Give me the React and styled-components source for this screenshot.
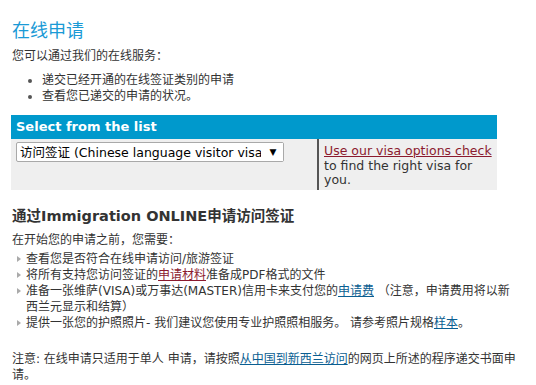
import React from 'react';
import styled, { createGlobalStyle } from 'styled-components';

const Global = createGlobalStyle`
  body {
    margin: 0;
    background: #fff;
    font-family: "DejaVu Sans", "Noto Sans CJK SC", sans-serif;
    font-size: 12px;
    color: #333;
  }
`

const Page = styled.div`
  padding: 17px 12px 0 12px;
`

const Title = styled.h2`
  margin: 0;
  font-size: 18px;
  font-weight: normal;
  line-height: 24px;
  color: #1a9ad6;
  font-family: "Noto Sans CJK SC", sans-serif;
`

const Para = styled.p`
  margin: ${p => p.top || 0}px 0 0 0;
  line-height: 16px;
`

const DotList = styled.ul`
  margin: 8px 0 0 0;
  padding-left: 30px;
  line-height: 16px;
  li::marker { color: #555; }
`

const Table = styled.div`
  margin-top: 11px;
  width: 486px;
  margin-left: -1px;
`

const Head = styled.div`
  height: 24px;
  background: #0099cc;
  color: #fff;
  font-weight: bold;
  font-size: 13px;
  line-height: 24px;
  padding-left: 5px;
`

const Row = styled.div`
  display: flex;
  background: #efefef;
  height: 51px;
`

const LeftCell = styled.div`
  width: 301px;
  padding: 3px 0 0 5px;
`

const RightCell = styled.div`
  flex: 1;
  border-left: 2px solid #555;
  padding: 5px 4px 0 5px;
  line-height: 14.5px;
  font-size: 12.5px;
`

const SelectWrap = styled.div`
  position: relative;
  width: 268px;
  height: 20px;
`

const Select = styled.select`
  appearance: none;
  width: 100%;
  height: 20px;
  border: 1px solid #a9a9a9;
  border-radius: 2px;
  background: #fff;
  font-family: "DejaVu Sans", "Noto Sans CJK SC", sans-serif;
  font-size: 12.5px;
  color: #000;
  padding: 0 22px 0 3px;
`

const Arrow = styled.span`
  position: absolute;
  right: 1px;
  top: 1px;
  width: 20px;
  height: 18px;
  background: #fff;
  font-size: 9px;
  line-height: 18px;
  text-align: center;
  color: #000;
  pointer-events: none;
`

const A = styled.a`
  color: ${p => p.red ? '#8b1a2e' : '#0a5e91'};
  text-decoration: underline;
`

const Heading = styled.h3`
  margin: 15px 0 0 0;
  font-size: 14.5px;
  font-weight: bold;
  line-height: 22px;
  color: #333;
`

const TriList = styled.ul`
  margin: 3px 0 0 0;
  padding: 0 8px 0 14px;
  list-style: none;
  line-height: 16px;
`

const TriItem = styled.li`
  position: relative;
  &::before {
    content: "";
    position: absolute;
    left: -9px;
    top: 5px;
    border-left: 4px solid #aaa;
    border-top: 3px solid transparent;
    border-bottom: 3px solid transparent;
  }
`

export default function App() {
  return (
    <Page>
      <Global />
      <Title>在线申请</Title>
      <Para top={7}>您可以通过我们的在线服务：</Para>
      <DotList>
        <li>递交已经开通的在线签证类别的申请</li>
        <li>查看您已递交的申请的状况。</li>
      </DotList>

      <Table>
        <Head>Select from the list</Head>
        <Row>
          <LeftCell>
            <SelectWrap>
              <Select defaultValue="v">
                <option value="v">访问签证 (Chinese language visitor visa)</option>
              </Select>
              <Arrow>▼</Arrow>
            </SelectWrap>
          </LeftCell>
          <RightCell>
            <A red href="#">Use our visa options check</A> to find the right visa for you.
          </RightCell>
        </Row>
      </Table>

      <Heading>通过Immigration ONLINE申请访问签证</Heading>
      <Para top={5}>在开始您的申请之前，您需要：</Para>
      <TriList>
        <TriItem>查看您是否符合在线申请访问/旅游签证</TriItem>
        <TriItem>将所有支持您访问签证的<A red href="#">申请材料</A>准备成PDF格式的文件</TriItem>
        <TriItem>准备一张维萨(VISA)或万事达(MASTER)信用卡来支付您的<A href="#">申请费</A> （注意，申请费用将以新西兰元显示和结算）</TriItem>
        <TriItem>提供一张您的护照照片- 我们建议您使用专业护照照相服务。 请参考照片规格<A href="#">样本</A>。</TriItem>
      </TriList>
      <Para top={20}>注意: 在线申请只适用于单人 申请，请按照<A href="#">从中国到新西兰访问</A>的网页上所述的程序递交书面申请。</Para>
    </Page>
  );
}
